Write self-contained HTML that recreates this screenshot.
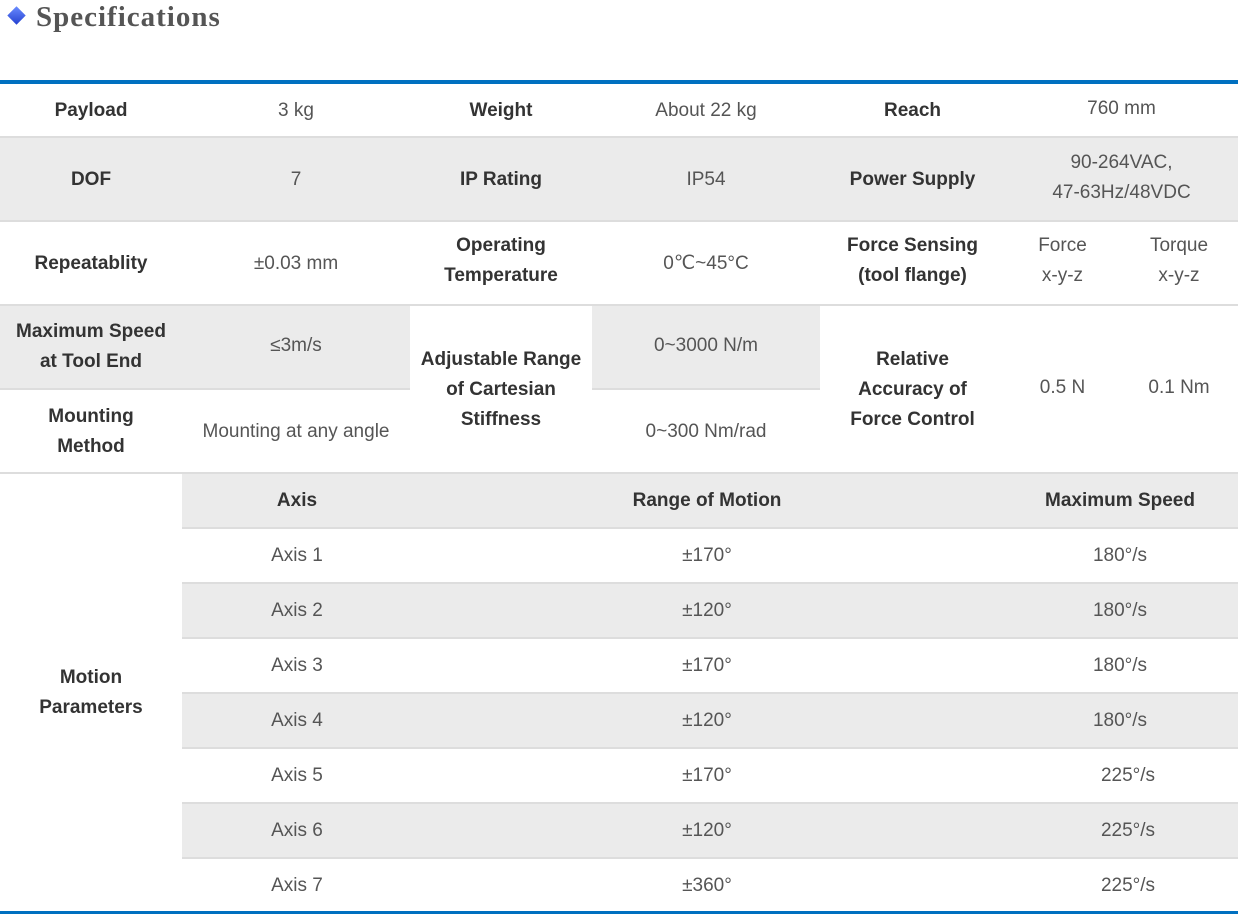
<!DOCTYPE html>
<html><head><meta charset="utf-8"><style>
body{margin:0;width:1240px;height:915px;background:#fff;position:relative;overflow:hidden;font-family:"Liberation Sans",sans-serif;}
.c{position:absolute;display:flex;align-items:center;justify-content:center;text-align:center;font-size:19px;line-height:30px;color:#555;box-sizing:border-box;}
.b{font-weight:bold;color:#333;}
.g{background:#ebebeb;}
.h{position:absolute;height:2px;background:#ddd;}
</style></head><body>
<div style="position:absolute;left:10px;top:9px;width:13px;height:13px;background:linear-gradient(135deg,#6a8cff,#2440d0);transform:rotate(45deg);"></div>
<div style="position:absolute;left:36px;top:1px;font-family:'Liberation Serif',serif;font-weight:bold;font-size:29px;color:#555;letter-spacing:1px;">Specifications</div>
<div style="position:absolute;left:0;top:80px;width:1238px;height:4px;background:#0070c0;"></div>

<!-- row1 -->
<div class="c b" style="left:0;top:84px;width:182px;height:53px">Payload</div>
<div class="c" style="left:182px;top:84px;width:228px;height:53px">3 kg</div>
<div class="c b" style="left:410px;top:84px;width:182px;height:53px">Weight</div>
<div class="c" style="left:592px;top:84px;width:228px;height:53px">About 22 kg</div>
<div class="c b" style="left:820px;top:84px;width:185px;height:53px">Reach</div>
<div class="c" style="left:1005px;top:84px;width:233px;height:50px">760 mm</div>
<div class="h" style="left:0;top:136px;width:1238px"></div>
<!-- row2 -->
<div class="g" style="position:absolute;left:0;top:138px;width:1238px;height:83px"></div>
<div class="c b" style="left:0;top:138px;width:182px;height:83px">DOF</div>
<div class="c" style="left:182px;top:138px;width:228px;height:83px">7</div>
<div class="c b" style="left:410px;top:138px;width:182px;height:83px">IP Rating</div>
<div class="c" style="left:592px;top:138px;width:228px;height:83px">IP54</div>
<div class="c b" style="left:820px;top:138px;width:185px;height:83px">Power Supply</div>
<div class="c" style="left:1005px;top:134px;width:233px;height:88px">90-264VAC,<br>47-63Hz/48VDC</div>
<div class="h" style="left:0;top:220px;width:1238px"></div>
<!-- row3 -->
<div class="c b" style="left:0;top:222px;width:182px;height:83px">Repeatablity</div>
<div class="c" style="left:182px;top:222px;width:228px;height:83px">±0.03 mm</div>
<div class="c b" style="left:410px;top:219px;width:182px;height:83px">Operating<br>Temperature</div>
<div class="c" style="left:592px;top:222px;width:228px;height:83px">0℃~45°C</div>
<div class="c b" style="left:820px;top:219px;width:185px;height:83px">Force Sensing<br>(tool flange)</div>
<div class="c" style="left:1005px;top:219px;width:115px;height:83px">Force<br>x-y-z</div>
<div class="c" style="left:1120px;top:219px;width:118px;height:83px">Torque<br>x-y-z</div>
<div class="h" style="left:0;top:304px;width:1238px"></div>
<!-- rows 4-5 -->
<div class="g" style="position:absolute;left:0;top:306px;width:410px;height:83px"></div>
<div class="g" style="position:absolute;left:592px;top:306px;width:228px;height:83px"></div>
<div class="c b" style="left:0;top:305px;width:182px;height:83px">Maximum Speed<br>at Tool End</div>
<div class="c" style="left:182px;top:305px;width:228px;height:83px;align-items:flex-start;padding-top:26px">≤3m/s</div>
<div class="c b" style="left:410px;top:306px;width:182px;height:167px">Adjustable Range<br>of Cartesian<br>Stiffness</div>
<div class="c" style="left:592px;top:305px;width:228px;height:83px;align-items:flex-start;padding-top:26px">0~3000 N/m</div>
<div class="c b" style="left:820px;top:306px;width:185px;height:167px">Relative<br>Accuracy of<br>Force Control</div>
<div class="c" style="left:1005px;top:306px;width:115px;height:164px">0.5 N</div>
<div class="c" style="left:1120px;top:306px;width:118px;height:164px">0.1 Nm</div>
<div class="h" style="left:0;top:388px;width:410px"></div>
<div class="h" style="left:592px;top:388px;width:228px"></div>
<div class="c b" style="left:0;top:390px;width:182px;height:83px">Mounting<br>Method</div>
<div class="c" style="left:182px;top:390px;width:228px;height:83px">Mounting at any angle</div>
<div class="c" style="left:592px;top:390px;width:228px;height:83px">0~300 Nm/rad</div>
<div class="h" style="left:0;top:472px;width:1238px"></div>
<!-- motion -->
<div class="c b" style="left:0;top:474px;width:182px;height:438px">Motion<br>Parameters</div>
<div style="position:absolute;left:182px;top:474px;width:1056px;">
<div class="g" style="position:absolute;left:0;top:0;width:1056px;height:53px"></div>
<div class="c b" style="left:0;top:0;width:230px;height:53px">Axis</div>
<div class="c b" style="left:230px;top:0;width:590px;height:53px">Range of Motion</div>
<div class="c b" style="left:820px;top:0;width:236px;height:53px">Maximum Speed</div>
<div class="h" style="left:0;top:53px;width:1056px"></div>
</div>
<div id="m"></div>
<script>
var d=[["1","170","180"],["2","120","180"],["3","170","180"],["4","120","180"],["5","170","225"],["6","120","225"],["7","360","225"]];
var h="";
for(var i=0;i<7;i++){var t=529+i*55;
if(i%2==1)h+='<div class="g" style="position:absolute;left:182px;top:'+t+'px;width:1056px;height:53px"></div>';
h+='<div class="c" style="left:182px;top:'+t+'px;width:230px;height:53px">Axis '+d[i][0]+'</div>';
h+='<div class="c" style="left:412px;top:'+t+'px;width:590px;height:53px">±'+d[i][1]+'°</div>';
h+='<div class="c" style="left:'+(d[i][2]=="225"?1010:1002)+'px;top:'+t+'px;width:236px;height:53px">'+d[i][2]+'°/s</div>';
if(i<6)h+='<div class="h" style="left:182px;top:'+(t+53)+'px;width:1056px"></div>';}
document.getElementById("m").innerHTML=h;
</script>
<div style="position:absolute;left:0;top:911px;width:1238px;height:3px;background:#0070c0;"></div>
</body></html>
